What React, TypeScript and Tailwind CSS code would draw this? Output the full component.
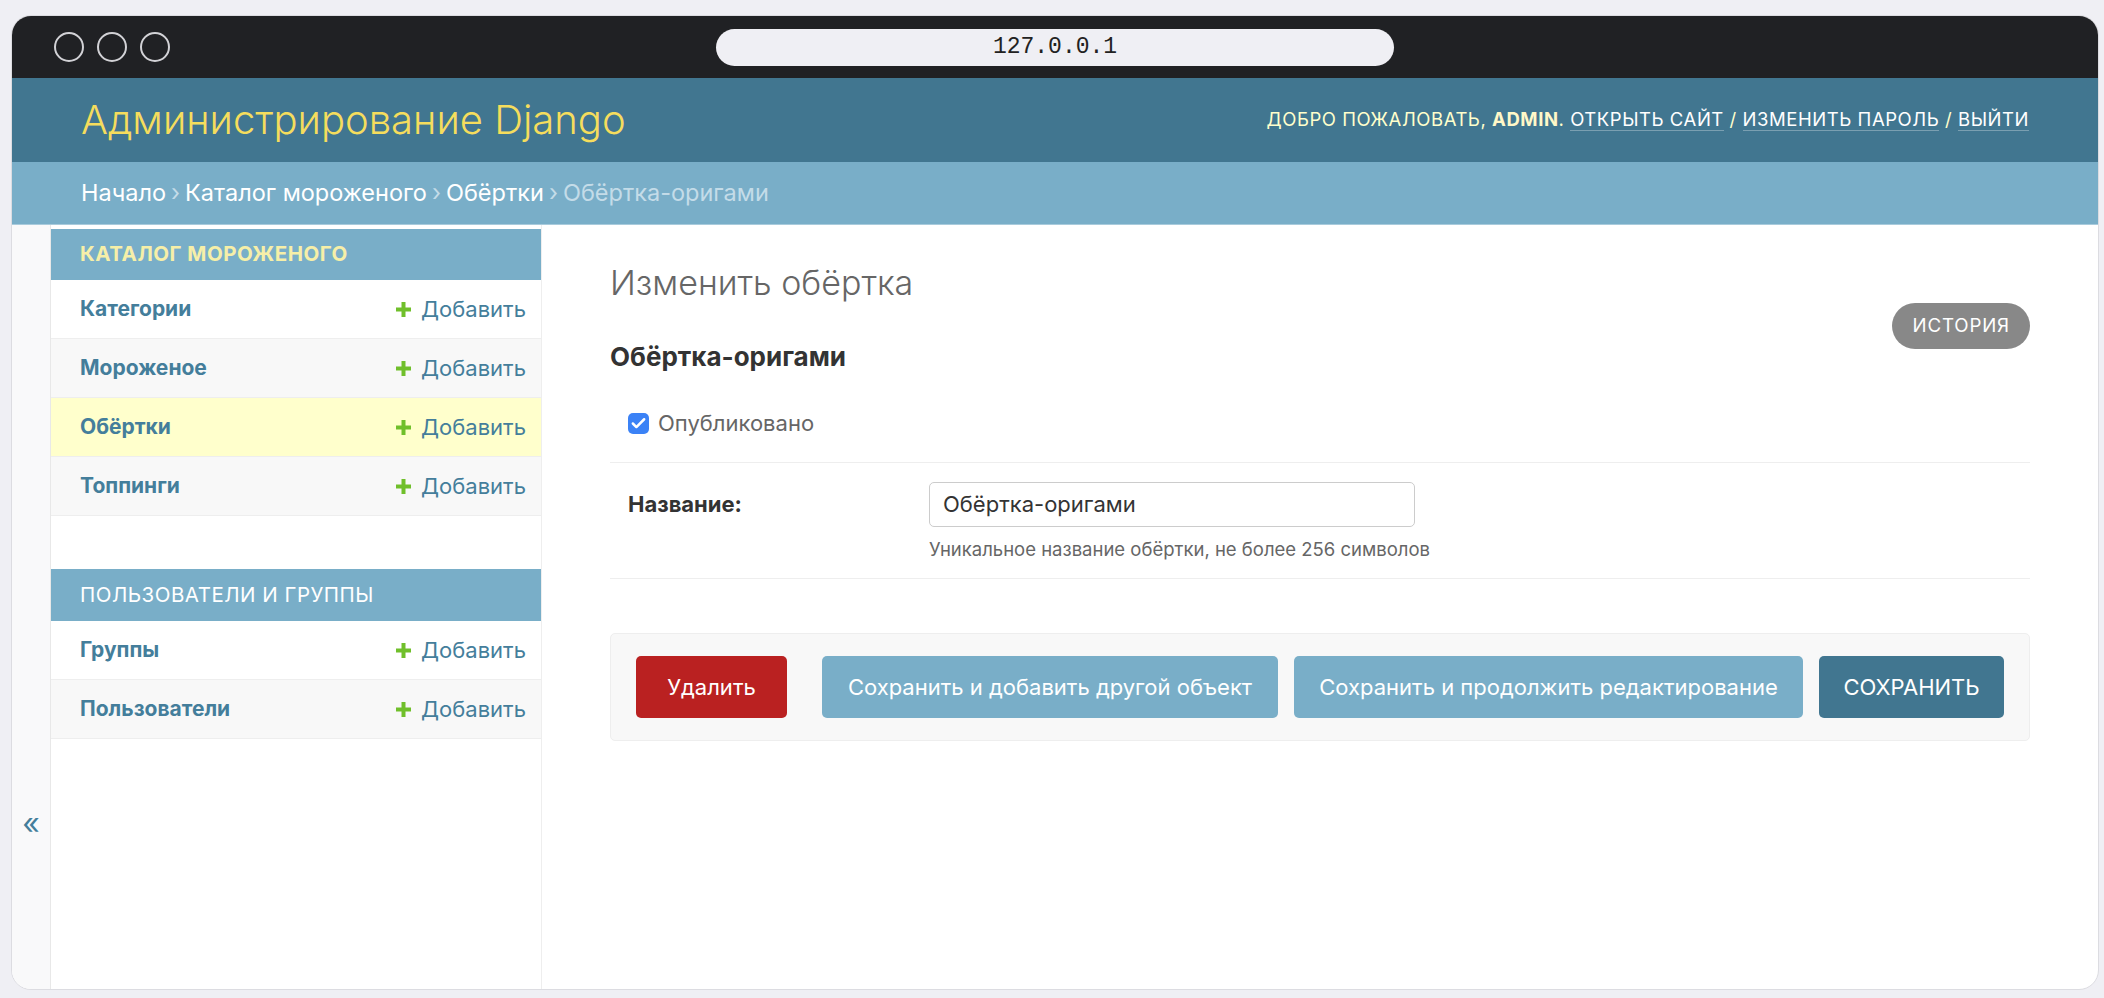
import { Check } from "lucide-react";

type Model = { name: string; bg: string };

const iceCream: Model[] = [
  { name: "Категории", bg: "bg-white" },
  { name: "Мороженое", bg: "bg-[#f8f8f8]" },
  { name: "Обёртки", bg: "bg-[#ffc]" },
  { name: "Топпинги", bg: "bg-[#f8f8f8]" },
];

const auth: Model[] = [
  { name: "Группы", bg: "bg-white" },
  { name: "Пользователи", bg: "bg-[#f8f8f8]" },
];

const AddIcon = () => (
  <svg width="15" height="15" viewBox="0 0 15 15" className="shrink-0">
    <rect x="5.5" y="0" width="4" height="15" fill="#70bf2b" />
    <rect x="0" y="5.5" width="15" height="4" fill="#70bf2b" />
  </svg>
);

const ModelRow = ({ model }: { model: Model }) => (
  <div
    className={`flex h-[59px] items-center justify-between border-b border-[#eeeeee] pl-[29px] pr-[15px] ${model.bg}`}
  >
    <a className="text-[21px] font-bold text-[#447e9b]">{model.name}</a>
    <a className="flex items-center gap-[10px] text-[22px] text-[#447e9b]">
      <AddIcon />
      Добавить
    </a>
  </div>
);

export default function App() {
  return (
    <div className="min-h-screen w-full bg-[#efeff4] pt-[15px] pr-[5px] pb-[8px] pl-[11px] font-[Inter,sans-serif]">
      <div className="flex h-[975px] flex-col overflow-hidden rounded-[20px] border border-[#dcdce1] bg-white">
        {/* Browser chrome */}
        <div className="grid h-[62px] shrink-0 grid-cols-[1fr_678px_1fr] items-center bg-[#202124]">
          <div className="flex gap-[13px] pl-[42px]">
            <span className="h-[30px] w-[30px] rounded-full border-2 border-[#d2d2d6]" />
            <span className="h-[30px] w-[30px] rounded-full border-2 border-[#d2d2d6]" />
            <span className="h-[30px] w-[30px] rounded-full border-2 border-[#d2d2d6]" />
          </div>
          <div className="flex h-[37px] items-center justify-center rounded-full bg-[#efeff4] font-['Liberation_Mono',monospace] text-[23px] text-[#222]">
            127.0.0.1
          </div>
          <div />
        </div>

        {/* Header */}
        <div className="flex h-[84px] shrink-0 items-center justify-between bg-[#417690] px-[69px]">
          <div className="text-[40px] font-light text-[#f5dd5d]">Администрирование Django</div>
          <div className="text-[18.5px] uppercase tracking-[0.55px] text-[#ffc]">
            Добро пожаловать, <strong className="font-bold text-[#fff8c8]">admin</strong>.{" "}
            <a className="border-b border-white/30 text-white">Открыть сайт</a> /{" "}
            <a className="border-b border-white/30 text-white">Изменить пароль</a> /{" "}
            <a className="border-b border-white/30 text-white">Выйти</a>
          </div>
        </div>

        {/* Breadcrumbs */}
        <div className="flex h-[63px] shrink-0 items-center border-b border-[#a9cbdc] bg-[#79aec8] px-[69px] text-[23.5px] text-[#c4dce8]">
          <a className="text-white">Начало</a>
          <span className="px-[5px]">›</span>
          <a className="text-white">Каталог мороженого</a>
          <span className="px-[5px]">›</span>
          <a className="text-white">Обёртки</a>
          <span className="px-[5px]">›</span>
          <span>Обёртка-оригами</span>
        </div>

        <div className="flex min-h-0 flex-1">
          {/* Sidebar toggle */}
          <div className="flex w-[39px] shrink-0 justify-center border-r border-[#e8e8e8] bg-[#f9f9fa] pt-[583px] text-[30px] leading-none text-[#447e9b]">
            «
          </div>

          {/* Sidebar */}
          <div className="w-[491px] shrink-0 border-r border-[#eeeeee] pt-[4px]">
            <div className="mb-[53px]">
              <div className="flex h-[51px] items-center bg-[#79aec8] pl-[29px] text-[20.5px] font-bold uppercase tracking-[0.5px] text-[#f6efa8]">
                Каталог мороженого
              </div>
              {iceCream.map((m) => (
                <ModelRow key={m.name} model={m} />
              ))}
            </div>
            <div>
              <div className="flex h-[52px] items-center bg-[#79aec8] pl-[29px] text-[20.5px] uppercase tracking-[0.5px] text-white">
                Пользователи и группы
              </div>
              {auth.map((m) => (
                <ModelRow key={m.name} model={m} />
              ))}
            </div>
          </div>

          {/* Content */}
          <div className="flex-1 px-[68px] pt-[37px]">
            <h1 className="text-[34px] leading-[41px] font-light text-[#666]">Изменить обёртка</h1>

            <div className="flex items-start justify-between">
              <h2 className="mt-[39px] text-[26px] leading-[30px] font-bold text-[#333]">Обёртка-оригами</h2>
              <a className="flex h-[46px] items-center rounded-full bg-[#888] px-[20px] text-[18.7px] uppercase tracking-[0.85px] text-white">
                История
              </a>
            </div>

            <div className="flex items-center gap-[9px] border-b border-[#eeeeee] pt-[38px] pb-[26px] pl-[18px] leading-[26px]">
              <span className="flex h-[21px] w-[21px] items-center justify-center rounded-[5px] bg-[#3b82f6]">
                <Check className="h-[17px] w-[17px] text-white" strokeWidth={3.5} />
              </span>
              <label className="text-[22px] text-[#666]">Опубликовано</label>
            </div>

            <div className="flex border-b border-[#eeeeee] pt-[19px] pb-[18px] pl-[18px]">
              <label className="flex h-[45px] w-[301px] shrink-0 items-center text-[22px] font-bold text-[#333]">
                Название:
              </label>
              <div>
                <div className="flex h-[45px] w-[486px] items-center rounded-[5px] border border-[#cccccc] px-[13px] text-[22px] text-[#333]">
                  Обёртка-оригами
                </div>
                <div className="mt-[11px] text-[18.5px] leading-[22px] text-[#666]">
                  Уникальное название обёртки, не более 256 символов
                </div>
              </div>
            </div>

            <div className="mt-[54px] flex items-center justify-between rounded-[5px] border border-[#eeeeee] bg-[#f8f8f8] px-[25px] py-[22px]">
              <a className="flex h-[62px] w-[151px] items-center justify-center rounded-[5px] bg-[#ba2121] text-[22px] text-white">
                Удалить
              </a>
              <div className="flex gap-[16px]">
                <button className="h-[62px] w-[456px] rounded-[5px] bg-[#79aec8] text-[22px] text-white">
                  Сохранить и добавить другой объект
                </button>
                <button className="h-[62px] w-[509px] rounded-[5px] bg-[#79aec8] text-[22px] text-white">
                  Сохранить и продолжить редактирование
                </button>
                <button className="h-[62px] w-[185px] rounded-[5px] bg-[#417690] text-[22px] uppercase text-white">
                  Сохранить
                </button>
              </div>
            </div>
          </div>
        </div>
      </div>
    </div>
  );
}
